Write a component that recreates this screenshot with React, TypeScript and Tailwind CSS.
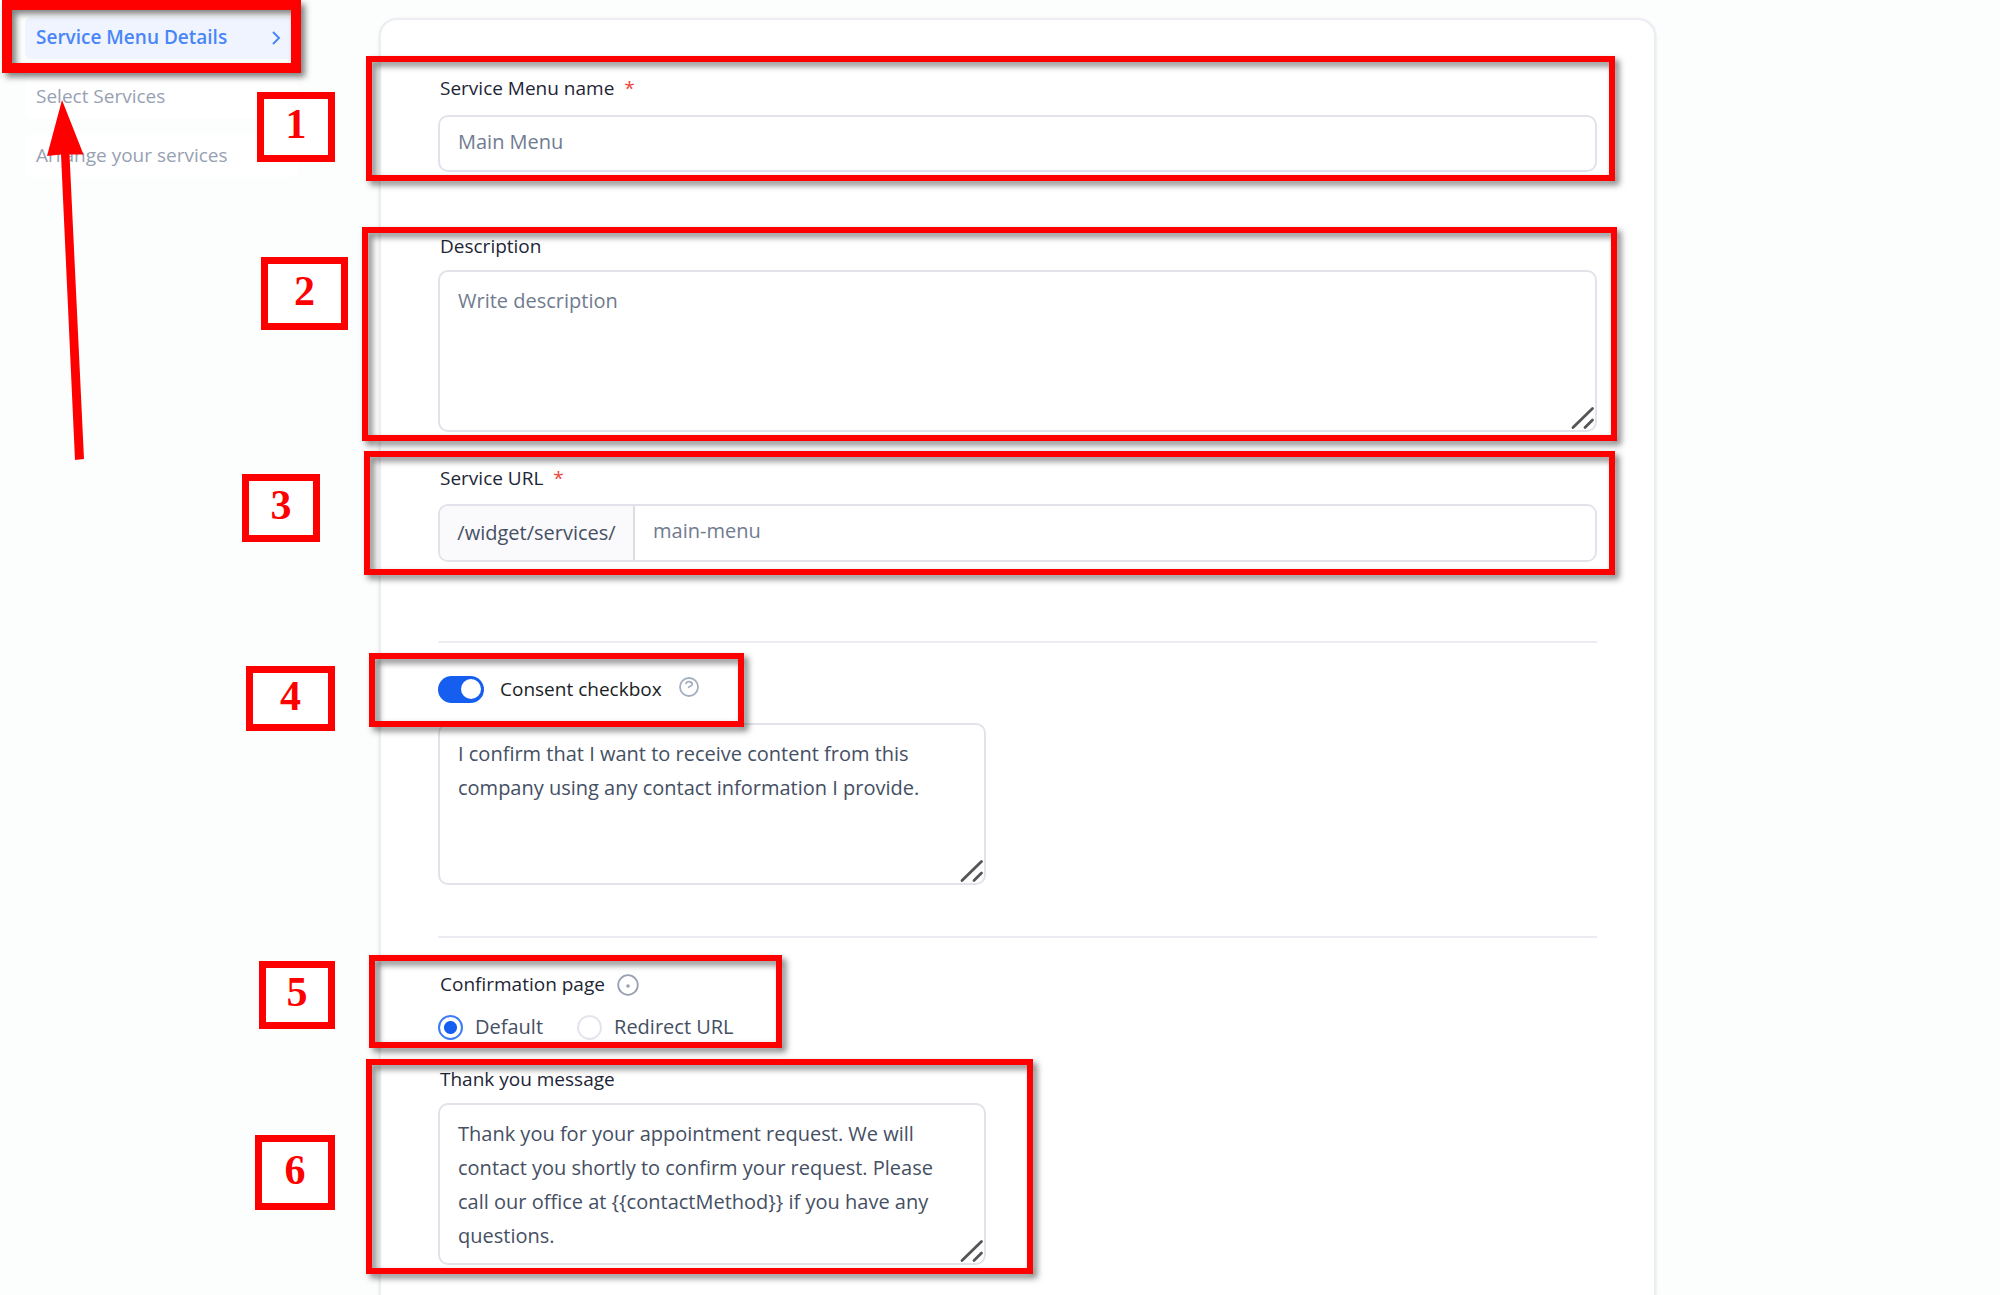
import { useState } from "react";
import type { ReactNode } from "react";

const labelClass = "text-[19px] leading-7 text-[#1d2536]";
const boxClass =
  "w-full rounded-[10px] border-2 border-[#e2e2ea] bg-white pl-[18px] text-[20px] outline-none placeholder:text-[#707b8f]";

function ResizeGrip() {
  return (
    <svg className="pointer-events-none absolute right-0.5 bottom-0.5 size-6" viewBox="0 0 24 24" fill="none" stroke="#555" strokeWidth="2.8" strokeLinecap="round">
      <path d="M2 21.500 21.500 2.500M14 21.500 21.500 14" />
    </svg>
  );
}

function TextBlock({ id, value, placeholder }: { id: string; value?: string; placeholder?: string }) {
  return (
    <div className="relative">
      <textarea
        id={id}
        defaultValue={value}
        placeholder={placeholder}
        className={`${boxClass} block h-[162px] resize-none overflow-hidden pt-3 pr-8 leading-[34px] text-[#454f63]`}
      />
      <ResizeGrip />
    </div>
  );
}

function Divider() {
  return <hr className="border-t-2 border-[#ebebf2]" />;
}

function Required() {
  return <span className="ml-[10px] text-[#f04438]">*</span>;
}

function NavItem({ children, active }: { children: ReactNode; active?: boolean }) {
  return (
    <a
      href="#"
      className={
        active
          ? "flex h-[42px] items-center justify-between rounded-md bg-[#eff4ff] pr-4 pb-0.5 pl-[11px] font-semibold text-[#4a86f7]"
          : "flex h-[42px] items-center rounded-md bg-white pb-0.5 pl-[11px] text-[#98a1b3]"
      }
    >
      <span>{children}</span>
      {active && (
        <svg className="mt-0.5 h-4 w-3" viewBox="0 0 12 16" fill="none" stroke="currentColor" strokeWidth="2">
          <path d="M3 2l6 6-6 6" />
        </svg>
      )}
    </a>
  );
}

const frames = [
  "left-[366px] top-[56px] h-[125px] w-[1249px] border-[6px]",
  "left-[362px] top-[227px] h-[214px] w-[1255px] border-[6px]",
  "left-[364px] top-[451px] h-[124px] w-[1251px] border-[6px]",
  "left-[369px] top-[653px] h-[74px] w-[375px] border-[6px]",
  "left-[369px] top-[955px] h-[93px] w-[413px] border-[6px]",
  "left-[366px] top-[1059px] h-[215px] w-[667px] border-[6px]",
  "left-[2px] top-0 h-[73px] w-[299px] border-[10px]",
];

const markers = [
  { n: "1", at: "left-[257px] top-[92px] h-[70px] w-[78px]" },
  { n: "2", at: "left-[261px] top-[257px] h-[73px] w-[87px]" },
  { n: "3", at: "left-[242px] top-[474px] h-[68px] w-[78px]" },
  { n: "4", at: "left-[246px] top-[666px] h-[65px] w-[89px]" },
  { n: "5", at: "left-[259px] top-[961px] h-[68px] w-[76px]" },
  { n: "6", at: "left-[255px] top-[1135px] h-[75px] w-[80px]" },
];

function Annotations() {
  return (
    <div className="pointer-events-none absolute inset-0 overflow-hidden">
      {frames.map((f) => (
        <div key={f} className={`absolute border-[#ff0000] drop-shadow-[4px_4px_3px_rgba(0,0,0,0.5)] ${f}`} />
      ))}
      {markers.map((m) => (
        <div
          key={m.n}
          className={`absolute flex items-center justify-center border-[7px] border-[#ff0000] bg-white pb-1.5 font-['Liberation_Serif',serif] text-[42px] leading-[46px] font-bold text-[#ff0000] ${m.at}`}
        >
          {m.n}
        </div>
      ))}
      <svg className="absolute top-[100px] left-[46px] h-[360px] w-[38px]" viewBox="0 0 38 360" fill="#ff0000">
        <path d="M16 0 37.500 54.500H23.500L38 359 29 360 15 54.500 1 56z" />
      </svg>
    </div>
  );
}

export default function App() {
  const [consent, setConsent] = useState(true);
  const [page, setPage] = useState("default");

  return (
    <div className="relative h-screen overflow-hidden bg-[#fcfdfd] font-['Open_Sans','Noto_Sans',sans-serif]">
      <div className="flex h-full items-stretch">
        <nav className="flex w-[379px] shrink-0 flex-col gap-[17px] pt-[17px] pr-[81px] pl-[25px] text-[19px]">
          <NavItem active>Service Menu Details</NavItem>
          <NavItem>Select Services</NavItem>
          <NavItem>Arrange your services</NavItem>
        </nav>

        <main className="mt-[18px] mr-[344px] flex-1 rounded-t-[18px] border-2 border-b-0 border-[#ededf3] bg-white px-[57px] shadow-sm">
          <form>
            <section className="pt-[54px]">
              <label htmlFor="name" className={`${labelClass} ml-0.5 block`}>
                Service Menu name
                <Required />
              </label>
              <input id="name" placeholder="Main Menu" className={`${boxClass} mt-[13px] block h-[57px] pb-1`} />
            </section>

            <section className="pt-[60px]">
              <label htmlFor="description" className={`${labelClass} ml-0.5 mb-[10px] block`}>
                Description
              </label>
              <TextBlock id="description" placeholder="Write description" />
            </section>

            <section className="pt-[32px] pb-[79px]">
              <label htmlFor="url" className={`${labelClass} ml-0.5 block`}>
                Service URL
                <Required />
              </label>
              <div className="mt-[12px] flex h-[58px] overflow-hidden rounded-[10px] border-2 border-[#e2e2ea] text-[20px]">
                <span className="flex w-[195px] shrink-0 items-center justify-center border-r-2 border-[#dcdce5] bg-[#fafafc] text-[#465064]">
                  /widget/services/
                </span>
                <input
                  id="url"
                  aria-label="Service URL"
                  placeholder="main-menu"
                  className="min-w-0 flex-1 bg-white pb-1 pl-[18px] outline-none placeholder:text-[#707b8f]"
                />
              </div>
            </section>

            <Divider />

            <section className="pt-[32px] pb-[51px]">
              <div className="mb-[20px] flex h-[28px] items-center">
                <button
                  type="button"
                  role="switch"
                  id="consent"
                  aria-checked={consent}
                  onClick={() => setConsent(!consent)}
                  className="flex h-[27px] w-[46px] items-center rounded-full bg-[#155eef] px-[3px]"
                >
                  <span className={consent ? "ml-auto size-5 rounded-full bg-white" : "size-5 rounded-full bg-white"} />
                </button>
                <label htmlFor="consent" className="ml-4 text-[19px] text-[#1a1d24]">
                  Consent checkbox
                </label>
                <svg className="mb-1 ml-[17px] size-5" viewBox="0 0 20 20" fill="none" stroke="#a5afc2" strokeWidth="1.800" strokeLinecap="round">
                  <circle cx="10" cy="10" r="9" />
                  <path d="M7 6.500C8 3.800 13.400 4.200 13.200 7.400c-.2 1.800-2.800 2-3.600 2.800" />
                </svg>
              </div>
              <div className="w-[548px]">
                <TextBlock
                  id="consent-text"
                  value="I confirm that I want to receive content from this company using any contact information I provide."
                />
              </div>
            </section>

            <Divider />

            <section className="pt-[32px]">
              <div className="ml-0.5 flex items-center">
                <span className={labelClass}>Confirmation page</span>
                <svg className="mt-0.5 ml-3 size-[22px]" viewBox="0 0 22 22" fill="none" stroke="#98a1b1" strokeWidth="1.800">
                  <circle cx="11" cy="11" r="9.800" />
                  <circle cx="11" cy="12" r="1.800" fill="#98a1b1" stroke="none" />
                </svg>
              </div>
              <div className="mt-[15px] flex items-center text-[20px] leading-7 text-[#454f63]">
                <label className="flex items-center gap-3">
                  <input
                    type="radio"
                    name="page"
                    checked={page === "default"}
                    onChange={() => setPage("default")}
                    className="size-[25px] appearance-none rounded-full border-2 border-[#e4e4ec] checked:border-[#3b7bf4] checked:bg-[radial-gradient(circle,#155eef_6px,white_7px)]"
                  />
                  Default
                </label>
                <label className="ml-[34px] flex items-center gap-3">
                  <input
                    type="radio"
                    name="page"
                    checked={page === "redirect"}
                    onChange={() => setPage("redirect")}
                    className="size-[25px] appearance-none rounded-full border-2 border-[#e4e4ec] checked:border-[#3b7bf4] checked:bg-[radial-gradient(circle,#155eef_6px,white_7px)]"
                  />
                  Redirect URL
                </label>
              </div>
              <label htmlFor="thanks" className={`${labelClass} mt-[24px] mb-[10px] ml-0.5 block`}>
                Thank you message
              </label>
              <div className="w-[548px]">
                <TextBlock
                  id="thanks"
                  value="Thank you for your appointment request. We will contact you shortly to confirm your request. Please call our office at {{contactMethod}} if you have any questions."
                />
              </div>
            </section>
          </form>
        </main>
      </div>
      <Annotations />
    </div>
  );
}
